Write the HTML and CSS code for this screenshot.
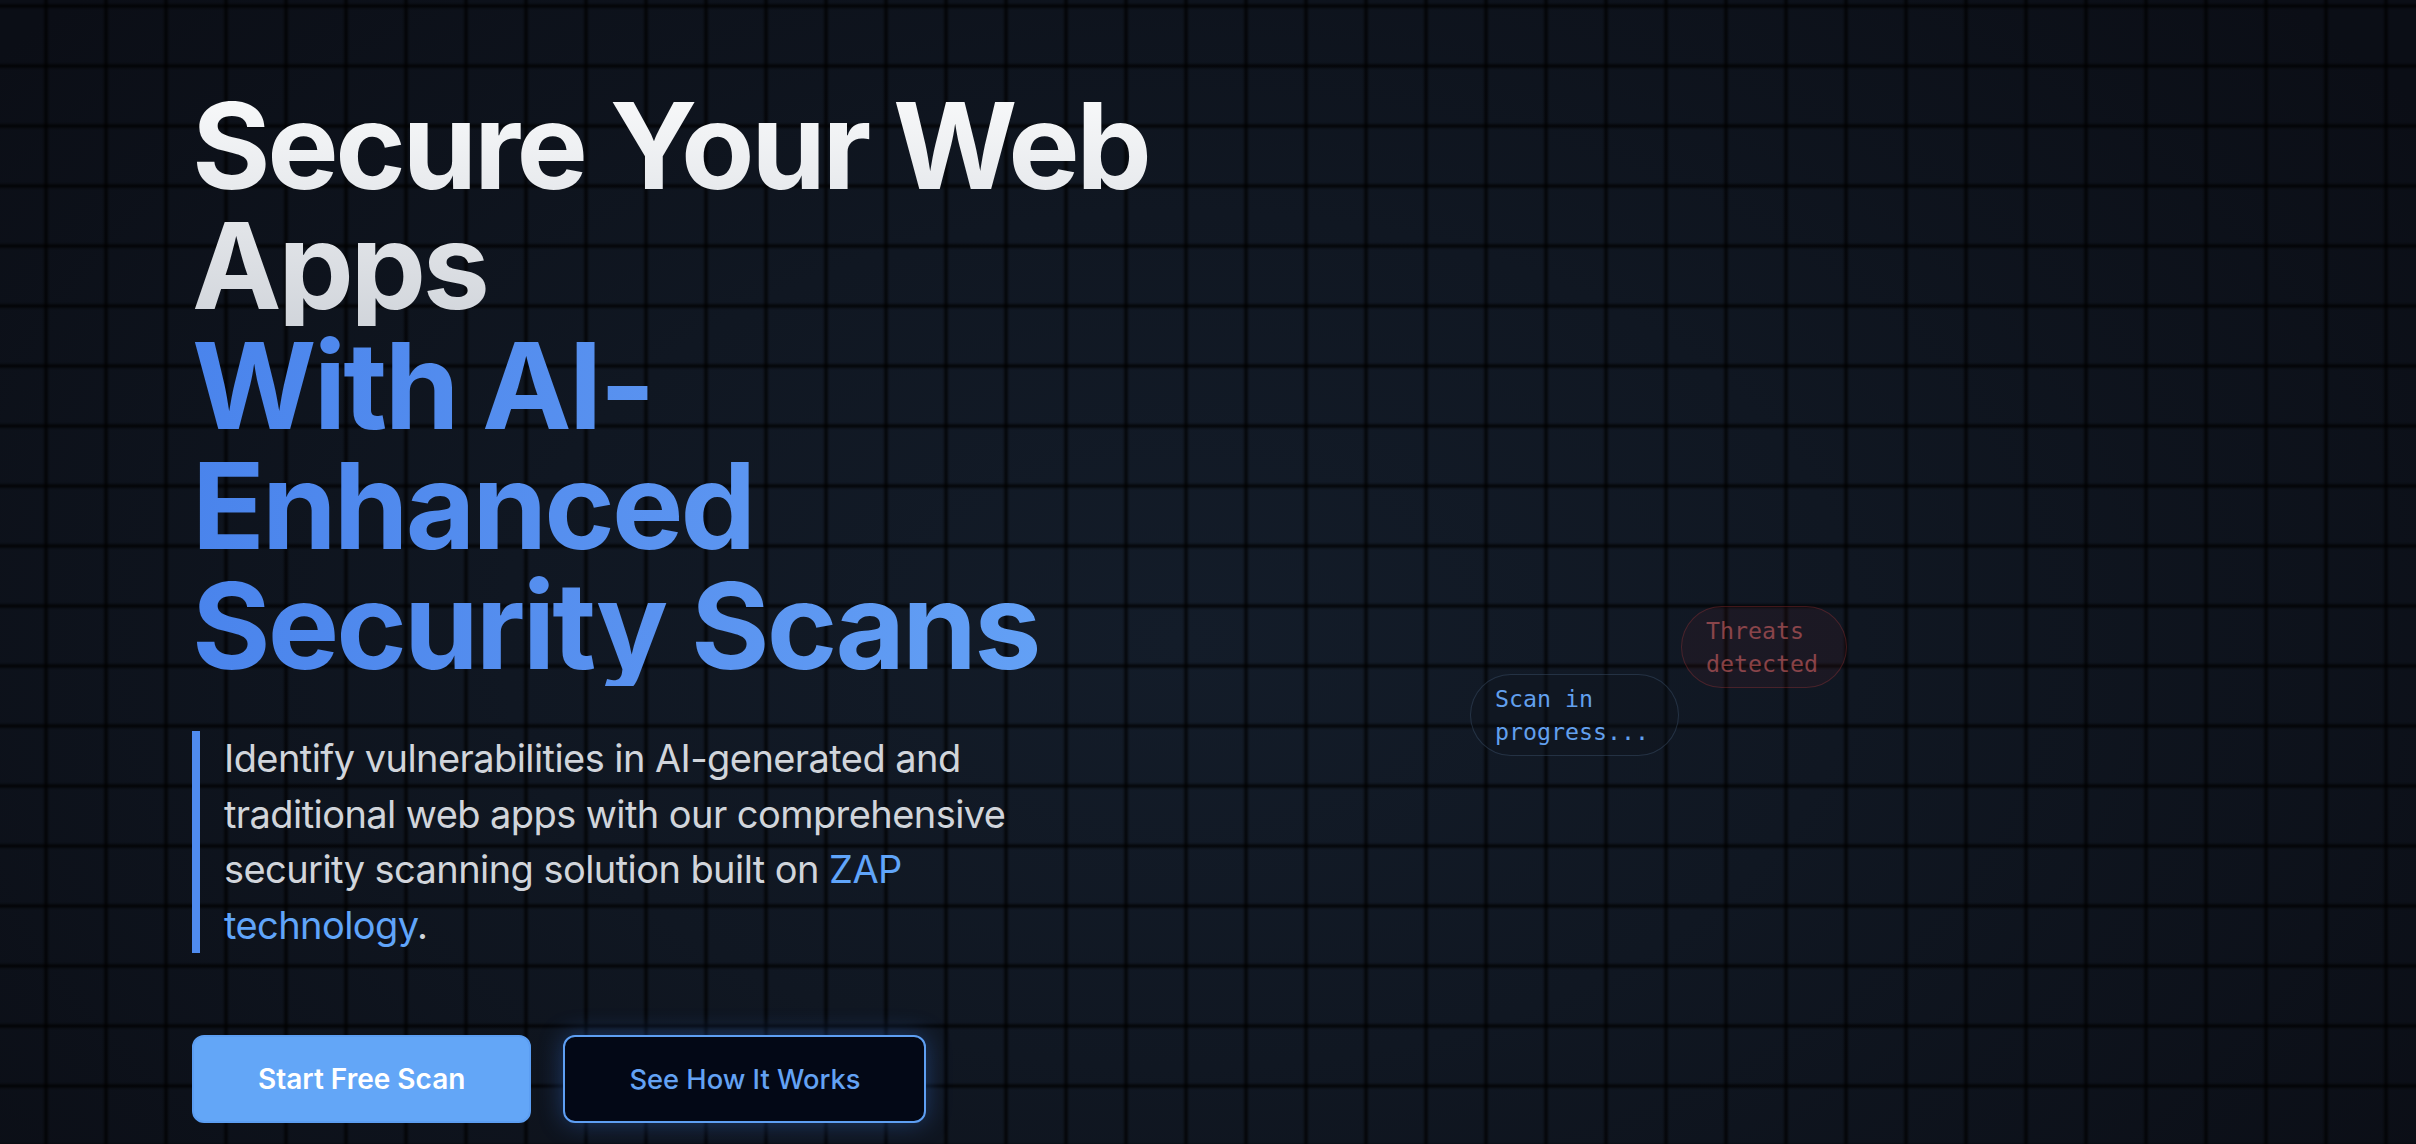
FILE: index.html
```html
<!DOCTYPE html>
<html lang="en">
<head>
<meta charset="utf-8">
<title>Secure Your Web Apps</title>
<link rel="stylesheet" href="styles.css">
</head>
<body>
<main class="hero">
  <div class="hero-inner">
    <div class="copy">
      <h1 class="title">
        <span class="title-light">Secure Your Web Apps</span>
        <span class="title-accent">With AI-Enhanced Security Scans</span>
      </h1>
      <p class="lead">Identify vulnerabilities in AI-generated and traditional web apps with our comprehensive security scanning solution built on <span class="lead-hl">ZAP</span> <span class="lead-hl">technology</span>.</p>
      <div class="actions">
        <a class="btn btn-primary" href="#">Start Free Scan</a>
        <a class="btn btn-ghost" href="#">See How It Works</a>
      </div>
    </div>
    <div class="visual">
      <span class="bubble bubble-scan">Scan in progress...</span>
      <span class="bubble bubble-threat">Threats detected</span>
    </div>
  </div>
</main>
</body>
</html>
```

FILE: styles.css
```css
html, body {
  margin: 0;
  padding: 0;
}

body {
  background: #0b0e16;
  font-family: Inter, "Noto Sans", "Liberation Sans", sans-serif;
  color: #d1d5db;
}

.hero {
  min-height: 1144px;
  box-sizing: border-box;
  padding: 86px 192px 40px;
  background-color: #0b0e16;
  background-image:
    linear-gradient(90deg, rgba(0,0,0,0.7) 0, rgba(0,0,0,0.55) 1px, rgba(0,0,0,0.2) 2.5px, rgba(0,0,0,0) 4px, rgba(0,0,0,0) 56px, rgba(0,0,0,0.2) 57.5px, rgba(0,0,0,0.55) 59px, rgba(0,0,0,0.7) 60px),
    linear-gradient(180deg, rgba(0,0,0,0.7) 0, rgba(0,0,0,0.55) 1px, rgba(0,0,0,0.2) 2.5px, rgba(0,0,0,0) 4px, rgba(0,0,0,0) 56px, rgba(0,0,0,0.2) 57.5px, rgba(0,0,0,0.55) 59px, rgba(0,0,0,0.7) 60px),
    radial-gradient(ellipse 1500px 950px at 1180px 640px, #131c29 0%, #101722 45%, #0b0e16 100%);
  background-size: 60px 60px, 60px 60px, 100% 100%;
  background-position: 46px 0, 0 6px, 0 0;
  background-repeat: repeat, repeat, no-repeat;
}

.hero-inner {
  display: grid;
  grid-template-columns: 984px 1fr;
  column-gap: 64px;
}

.copy {
  display: flex;
  flex-direction: column;
}

.title {
  margin: 0;
  font-size: 120px;
  line-height: 120px;
  font-weight: 700;
  letter-spacing: -0.028em;
}

.title-light {
  display: block;
  background: linear-gradient(180deg, #f9fafb 0%, #d1d5db 100%);
  -webkit-background-clip: text;
  background-clip: text;
  color: transparent;
}

.title-accent {
  display: block;
  letter-spacing: -0.024em;
  background: linear-gradient(90deg, #4a84ec 0%, #5a93f0 50%, #66a5f7 100%);
  -webkit-background-clip: text;
  background-clip: text;
  color: transparent;
}

.lead {
  margin: 45px 0 0;
  max-width: 830px;
  box-sizing: border-box;
  border-left: 8px solid #4f8bef;
  padding-left: 24px;
  font-size: 38px;
  line-height: 55.5px;
  letter-spacing: -0.015em;
  color: #d1d5db;
}

.lead-hl {
  color: #60a5fa;
}

.actions {
  display: flex;
  gap: 32px;
  margin-top: 82px;
}

.btn {
  display: inline-flex;
  align-items: center;
  justify-content: center;
  height: 88px;
  box-sizing: border-box;
  padding: 0 64px;
  border-radius: 12px;
  border: 2px solid transparent;
  font-size: 27px;
  text-decoration: none;
}

.btn-primary {
  background: #63a6f7;
  border-color: #5c9ef2;
  color: #ffffff;
  font-size: 28px;
  font-weight: 600;
}

.btn-ghost {
  background: #030816;
  border-color: #5e9ff3;
  color: #63a2f4;
  font-size: 27.3px;
  font-weight: 500;
  box-shadow: 0 0 24px rgba(59, 130, 246, 0.35);
}

.visual {
  position: relative;
}

.bubble {
  position: absolute;
  box-sizing: border-box;
  padding: 7px 24px;
  border-radius: 9999px;
  font-family: "DejaVu Sans Mono", "Liberation Mono", monospace;
  font-size: 23.25px;
  line-height: 33px;
}

.bubble-scan {
  left: 230px;
  top: 588px;
  width: 209px;
  border: 1px solid rgba(100, 130, 170, 0.25);
  background: rgba(15, 20, 30, 0.35);
  color: #62a0ee;
}

.bubble-threat {
  left: 441px;
  top: 520px;
  width: 166px;
  border: 1px solid rgba(239, 68, 68, 0.22);
  background: rgba(239, 68, 68, 0.05);
  color: rgba(248, 113, 113, 0.5);
}
```
